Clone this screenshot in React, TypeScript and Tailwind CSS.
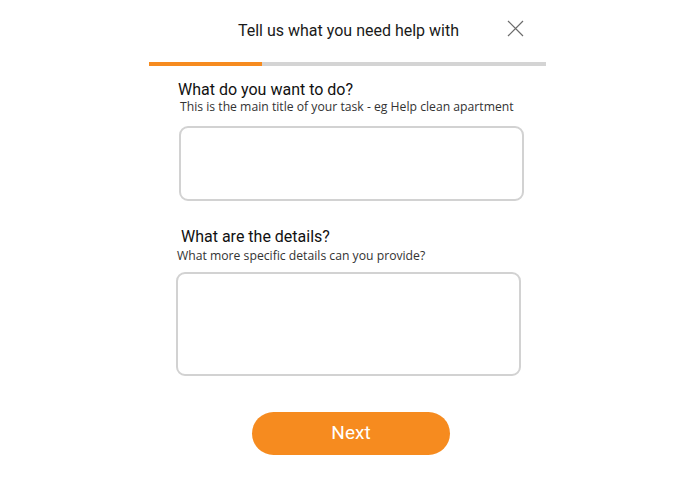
import React, { useState } from 'react';

export default function App() {
  const [task, setTask] = useState('');
  const [details, setDetails] = useState('');

  return (
    <div className="min-h-screen w-full bg-white flex justify-center" style={{ fontFamily: 'Roboto, "Liberation Sans", sans-serif' }}>
      <div className="w-[397px] flex flex-col">
        {/* header */}
        <div className="relative h-[62px] flex items-start justify-center">
          <h1 className="mt-[20px] ml-[2px] text-[16px] leading-[22px] text-[#1a1a1a]">Tell us what you need help with</h1>
          <button className="absolute right-[22px] top-[20px] w-[17px] h-[17px] text-[#6b6b6b]" aria-label="Close">
            <svg viewBox="0 0 17 17" className="w-full h-full" fill="none" stroke="currentColor" strokeWidth="1.2">
              <path d="M1 1 L16 16 M16 1 L1 16" />
            </svg>
          </button>
        </div>

        {/* progress */}
        <div className="h-[4px] w-full bg-[#d4d4d4]">
          <div className="h-full w-[113px] bg-[#f68b1f]" />
        </div>

        {/* form */}
        <div className="flex flex-col pl-[27px] pt-[14px]">
          <h2 className="text-[16px] leading-[20px] text-[#111] ml-[2px]">What do you want to do?</h2>
          <p className="ml-[4px] -mt-[1px] text-[12.2px] leading-[16px] text-[#333]" style={{ fontFamily: '"Open Sans", sans-serif' }}>
            This is the main title of your task - eg Help clean apartment
          </p>
          <textarea
            value={task}
            onChange={(e) => setTask(e.target.value)}
            className="mt-[11px] ml-[3px] w-[345px] h-[75px] rounded-[9px] border-2 border-[#d2d2d2] resize-none outline-none p-2 text-sm"
          />

          <h2 className="mt-[26px] ml-[5px] text-[16px] leading-[20px] text-[#111]">What are the details?</h2>
          <p className="ml-[1px] mt-[1px] text-[12.2px] leading-[16px] text-[#333]" style={{ fontFamily: '"Open Sans", sans-serif' }}>
            What more specific details can you provide?
          </p>
          <textarea
            value={details}
            onChange={(e) => setDetails(e.target.value)}
            className="mt-[8px] w-[345px] h-[104px] rounded-[9px] border-2 border-[#d2d2d2] resize-none outline-none p-2 text-sm"
          />
        </div>

        <div className="flex justify-center mt-[36px]">
          <button className="w-[198px] h-[43px] rounded-full bg-[#f68b1f] text-white text-[19px] ml-[7px]">
            Next
          </button>
        </div>
      </div>
    </div>
  );
}
